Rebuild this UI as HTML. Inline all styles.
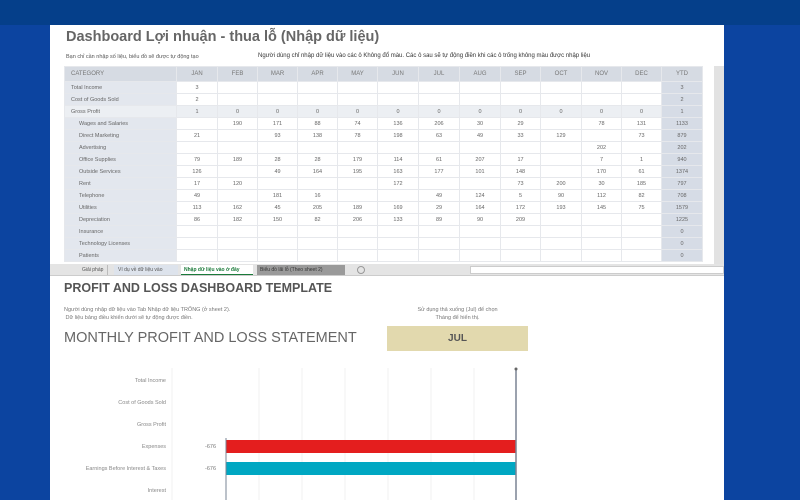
<!DOCTYPE html>
<html><head><meta charset="utf-8"><style>
*{margin:0;padding:0;box-sizing:border-box}
body{width:800px;height:500px;overflow:hidden;background:#0c44a0;font-family:"Liberation Sans","Noto Sans CJK SC",sans-serif;position:relative}
.a{position:absolute}
#top{left:0;top:0;width:800px;height:25px;background:#053f8a}
#panel{left:50px;top:25px;width:674px;height:475px;background:#fff}
table{position:absolute;left:64px;top:66px;border-collapse:collapse;table-layout:fixed;font-size:5.5px;color:#666}
td{height:12px;border:1px solid #e6e8ec;text-align:center;padding:0;white-space:nowrap;overflow:hidden}
tr.h td{height:15px;background:#d6dbe3;color:#777;font-size:6px}
td.c{text-align:left;padding-left:6px;background:#e3e7ee}
td.i{padding-left:14px}
td.y{background:#d6dce6}
tr.g td{background:#eceff3}
tr.g td.y{background:#d6dce6}
.lab{font-size:5.5px;color:#888;text-align:right;width:150px;left:16px}
</style></head><body>
<div class="a" id="top"></div>
<div class="a" id="panel"></div>
<div class="a" style="left:66px;top:29px;font-size:14.5px;font-weight:bold;color:#666">Dashboard Lợi nhuận - thua lỗ (Nhập dữ liệu)</div>
<div class="a" style="left:66px;top:54px;font-size:5.5px;color:#555">Bạn chỉ cần nhập số liệu, biểu đồ sẽ được tự động tạo</div>
<div class="a" style="left:258px;top:53px;font-size:6px;color:#333">Người dùng chỉ nhập dữ liệu vào các ô Không đổ màu. Các ô sau sẽ tự động điền khi các ô trống không màu được nhập liệu</div>
<table>
<colgroup><col style="width:112px"><col style="width:41px"><col style="width:40px"><col style="width:40px"><col style="width:40px"><col style="width:40px"><col style="width:41px"><col style="width:41px"><col style="width:41px"><col style="width:40px"><col style="width:41px"><col style="width:40px"><col style="width:40px"><col style="width:41px"></colgroup>
<tr class="h"><td class="c" style="background:#d6dbe3">CATEGORY</td><td>JAN</td><td>FEB</td><td>MAR</td><td>APR</td><td>MAY</td><td>JUN</td><td>JUL</td><td>AUG</td><td>SEP</td><td>OCT</td><td>NOV</td><td>DEC</td><td>YTD</td></tr>
<tr><td class="c">Total Income</td><td>3</td><td></td><td></td><td></td><td></td><td></td><td></td><td></td><td></td><td></td><td></td><td></td><td class="y">3</td></tr>
<tr><td class="c">Cost of Goods Sold</td><td>2</td><td></td><td></td><td></td><td></td><td></td><td></td><td></td><td></td><td></td><td></td><td></td><td class="y">2</td></tr>
<tr class="g"><td class="c">Gross Profit</td><td>1</td><td>0</td><td>0</td><td>0</td><td>0</td><td>0</td><td>0</td><td>0</td><td>0</td><td>0</td><td>0</td><td>0</td><td class="y">1</td></tr>
<tr><td class="c i">Wages and Salaries</td><td></td><td>190</td><td>171</td><td>88</td><td>74</td><td>136</td><td>206</td><td>30</td><td>29</td><td></td><td>78</td><td>131</td><td class="y">1133</td></tr>
<tr><td class="c i">Direct Marketing</td><td>21</td><td></td><td>93</td><td>138</td><td>78</td><td>198</td><td>63</td><td>49</td><td>33</td><td>129</td><td></td><td>73</td><td class="y">879</td></tr>
<tr><td class="c i">Advertising</td><td></td><td></td><td></td><td></td><td></td><td></td><td></td><td></td><td></td><td></td><td>202</td><td></td><td class="y">202</td></tr>
<tr><td class="c i">Office Supplies</td><td>79</td><td>189</td><td>28</td><td>28</td><td>179</td><td>114</td><td>61</td><td>207</td><td>17</td><td></td><td>7</td><td>1</td><td class="y">940</td></tr>
<tr><td class="c i">Outside Services</td><td>126</td><td></td><td>49</td><td>164</td><td>195</td><td>163</td><td>177</td><td>101</td><td>148</td><td></td><td>170</td><td>61</td><td class="y">1374</td></tr>
<tr><td class="c i">Rent</td><td>17</td><td>120</td><td></td><td></td><td></td><td>172</td><td></td><td></td><td>73</td><td>200</td><td>30</td><td>185</td><td class="y">797</td></tr>
<tr><td class="c i">Telephone</td><td>49</td><td></td><td>181</td><td>16</td><td></td><td></td><td>49</td><td>124</td><td>5</td><td>90</td><td>112</td><td>82</td><td class="y">708</td></tr>
<tr><td class="c i">Utilities</td><td>113</td><td>162</td><td>45</td><td>205</td><td>189</td><td>169</td><td>29</td><td>164</td><td>172</td><td>193</td><td>145</td><td>75</td><td class="y">1579</td></tr>
<tr><td class="c i">Depreciation</td><td>86</td><td>182</td><td>150</td><td>82</td><td>206</td><td>133</td><td>89</td><td>90</td><td>209</td><td></td><td></td><td></td><td class="y">1225</td></tr>
<tr><td class="c i">Insurance</td><td></td><td></td><td></td><td></td><td></td><td></td><td></td><td></td><td></td><td></td><td></td><td></td><td class="y">0</td></tr>
<tr><td class="c i">Technology Licenses</td><td></td><td></td><td></td><td></td><td></td><td></td><td></td><td></td><td></td><td></td><td></td><td></td><td class="y">0</td></tr>
<tr><td class="c i">Patients</td><td></td><td></td><td></td><td></td><td></td><td></td><td></td><td></td><td></td><td></td><td></td><td></td><td class="y">0</td></tr>
</table>
<div class="a" style="left:714px;top:66px;width:10px;height:199px;background:#e2e2e2"></div>
<div class="a" style="left:50px;top:264px;width:674px;height:12px;background:#e4e4e4;border-bottom:1px solid #ccc"></div>
<div class="a" style="left:78px;top:265px;height:10px;font-size:5px;color:#555;line-height:10px;padding:0 4px;border-right:1px solid #bbb">Giải pháp</div>
<div class="a" style="left:114px;top:265px;height:10px;width:64px;font-size:5px;color:#555;line-height:10px;background:#dde3ec;padding-left:4px">Ví dụ về dữ liệu vào</div>
<div class="a" style="left:181px;top:265px;height:10px;width:72px;font-size:5px;color:#1a7a3a;line-height:10px;background:#fff;padding-left:3px;border-bottom:1px solid #1a7a3a;font-weight:bold">Nhập dữ liệu vào ở đây</div>
<div class="a" style="left:257px;top:265px;height:10px;width:88px;font-size:5px;color:#333;line-height:10px;background:#9a9a9a;padding-left:3px">Biểu đồ lãi lỗ (Theo sheet 2)</div>
<div class="a" style="left:357px;top:266px;width:8px;height:8px;border:1px solid #999;border-radius:50%"></div>
<div class="a" style="left:470px;top:266px;width:254px;height:8px;background:#fff;border:1px solid #ccc"></div>
<div class="a" style="left:64px;top:281px;font-size:12.5px;font-weight:bold;color:#555">PROFIT AND LOSS DASHBOARD TEMPLATE</div>
<div class="a" style="left:64px;top:306px;font-size:5.5px;color:#777;line-height:8px">Người dùng nhập dữ liệu vào Tab Nhập dữ liệu TRỐNG (ở sheet 2).<br>&nbsp;Dữ liệu bảng điều khiển dưới sẽ tự động được điền.</div>
<div class="a" style="left:387px;top:306px;width:141px;text-align:center;font-size:5.5px;color:#777;line-height:8px">Sử dụng thả xuống (Jul) để chọn<br>Tháng để hiển thị.</div>
<div class="a" style="left:64px;top:330px;font-size:14.5px;color:#666">MONTHLY PROFIT AND LOSS STATEMENT</div>
<div class="a" style="left:387px;top:326px;width:141px;height:25px;background:#e2d9ae;text-align:center;line-height:25px;font-size:10px;font-weight:bold;color:#555">JUL</div>
<svg class="a" style="left:0;top:0" width="800" height="500">
<g stroke="#f0f0f0" stroke-width="1">
<line x1="172" y1="368" x2="172" y2="500"/><line x1="259" y1="368" x2="259" y2="500"/><line x1="302" y1="368" x2="302" y2="500"/><line x1="345" y1="368" x2="345" y2="500"/><line x1="388" y1="368" x2="388" y2="500"/><line x1="431" y1="368" x2="431" y2="500"/><line x1="474" y1="368" x2="474" y2="500"/></g>
<rect x="226" y="440" width="290" height="13" fill="#e41e1e"/>
<rect x="226" y="462" width="290" height="13" fill="#00a7c2"/>
<line x1="226" y1="438" x2="226" y2="500" stroke="#7a8494" stroke-width="1"/>
<line x1="516" y1="368" x2="516" y2="500" stroke="#7a8494" stroke-width="1.5"/>
<circle cx="516" cy="369" r="1.5" fill="#666"/>
</svg>
<div class="a lab" style="top:378px">Total Income</div>
<div class="a lab" style="top:400px">Cost of Goods Sold</div>
<div class="a lab" style="top:422px">Gross Profit</div>
<div class="a lab" style="top:444px">Expenses</div>
<div class="a lab" style="top:466px">Earnings Before Interest &amp; Taxes</div>
<div class="a lab" style="top:488px">Interest</div>
<div class="a" style="left:205px;top:444px;font-size:5.5px;color:#777">-676</div>
<div class="a" style="left:205px;top:466px;font-size:5.5px;color:#777">-676</div>
</body></html>
